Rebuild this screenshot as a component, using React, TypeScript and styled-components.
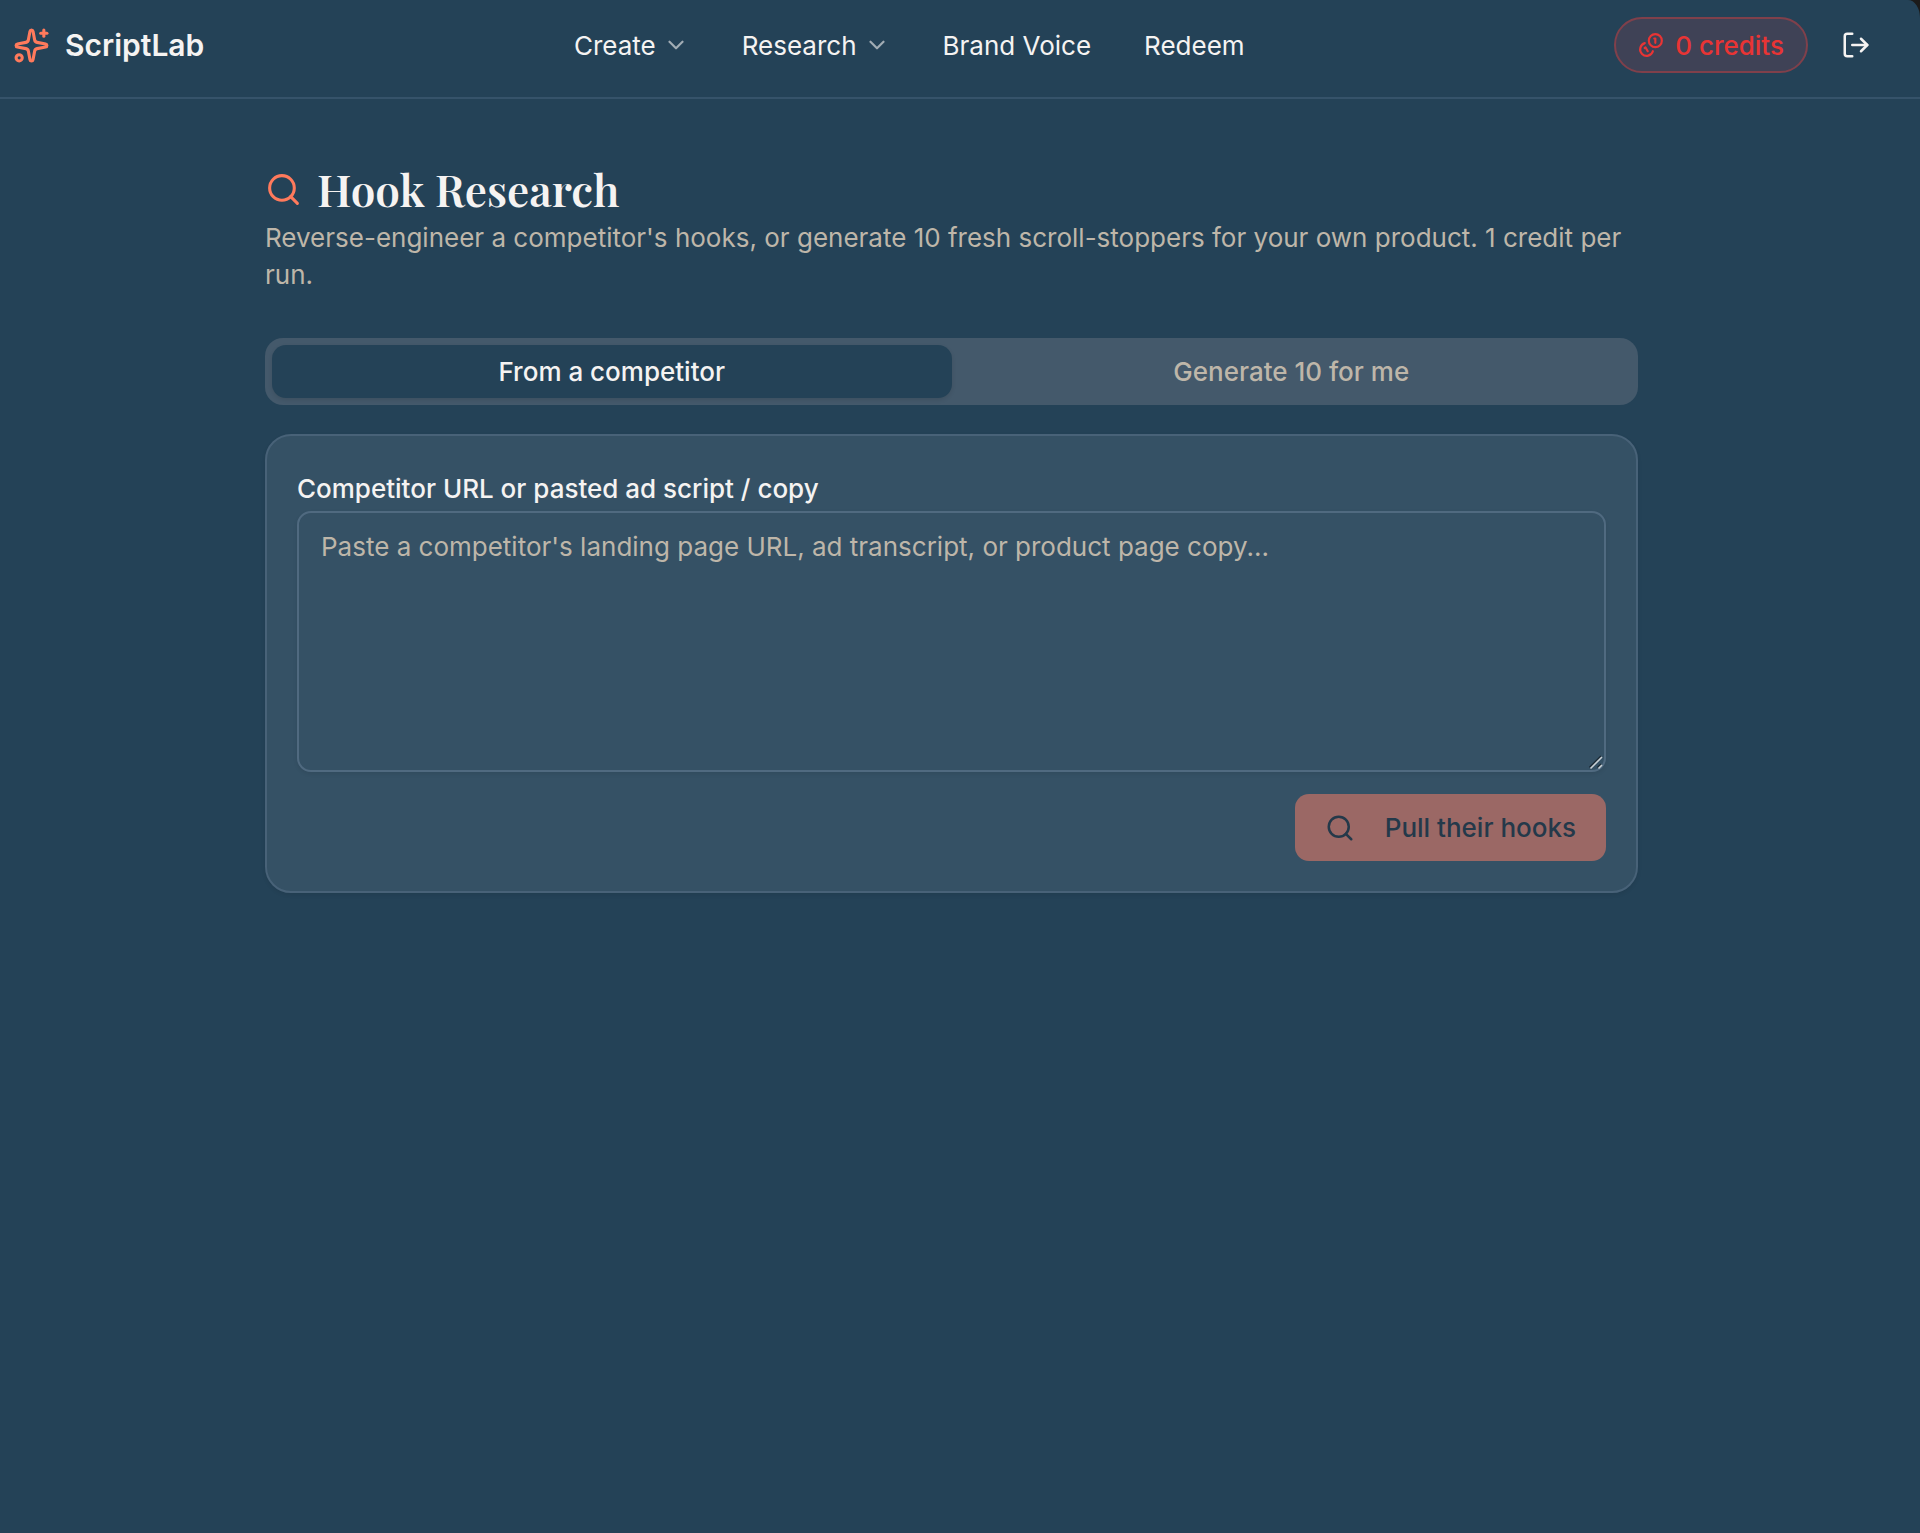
import React, { useState } from "react";
import styled, { createGlobalStyle } from "styled-components";
import { ChevronDown, LogOut, Search, Sparkles } from "lucide-react";

const color = {
  page: "#244257",
  line: "#36536a",
  card: "#355165",
  cardLine: "#486278",
  fieldLine: "#506a80",
  track: "#44596b",
  text: "#f5f3f2",
  muted: "#beb6a9",
  accent: "#ff7a5c",
  danger: "#e93434",
};

const GlobalStyle = createGlobalStyle`
  *, *::before, *::after { box-sizing: border-box; }
  html { background: #1c1b1a; }
  body {
    margin: 0;
    color: ${color.text};
    font-family: Inter, "Noto Sans", sans-serif;
    font-size: 26px;
    line-height: 37px;
  }
  button, textarea { font: inherit; color: inherit; }
`;

const Page = styled.div`
  min-height: 100vh;
  background: ${color.page};
  border-radius: 0 12px 0 0 / 0 18px 0 0;
`;

const Header = styled.header`
  display: flex;
  align-items: center;
  justify-content: space-between;
  padding: 17px 23px 24px 13px;
  border-bottom: 2px solid ${color.line};
`;

const Brand = styled.a`
  display: flex;
  align-items: center;
  gap: 15px;
  color: inherit;
  font-size: 30px;
  font-weight: 600;
  text-decoration: none;

  svg { color: ${color.accent}; }
`;

const Nav = styled.nav`
  display: flex;
  align-items: center;
  gap: 9px;
`;

const NavButton = styled.button`
  display: flex;
  align-items: center;
  gap: 7px;
  padding: 0 22px;
  border: 0;
  background: none;
  cursor: pointer;

  svg { opacity: 0.6; }
`;

const NavLink = styled.a`
  padding: 0 22px;
  color: inherit;
  text-decoration: none;
`;

const Account = styled.div`
  display: flex;
  align-items: center;
  gap: 7px;
`;

const Credits = styled.a`
  display: flex;
  align-items: center;
  gap: 11px;
  height: 56px;
  padding: 0 22px;
  border: 2px solid #80404b;
  border-radius: 28px;
  background: #3f4256;
  color: ${color.danger};
  font-weight: 500;
  text-decoration: none;
`;

const IconButton = styled.button`
  display: flex;
  padding: 13px 26px;
  border: 0;
  background: none;
  cursor: pointer;
`;

const Main = styled.main`
  padding: 60px 17px 60px 0;
`;

const Content = styled.div`
  max-width: 1373px;
  margin: 0 auto;
`;

const Title = styled.h1`
  display: flex;
  align-items: center;
  gap: 15px;
  margin: 0;
  font-family: "Playfair Display", "Liberation Serif", serif;
  font-size: 44px;
  font-weight: 600;
  line-height: 60px;

  svg { color: ${color.accent}; }
`;

const Lead = styled.p`
  margin: 0 0 45px;
  color: ${color.muted};
`;

const Tabs = styled.div`
  display: grid;
  grid-template-columns: 1fr 1fr;
  margin-bottom: 29px;
  padding: 7px;
  border-radius: 18px;
  background: ${color.track};
`;

const Tab = styled.button<{ $active: boolean }>`
  height: 53px;
  padding: 0 22px;
  border: 0;
  border-radius: 14px;
  background: ${(p) => (p.$active ? color.page : "transparent")};
  box-shadow: ${(p) => (p.$active ? "0 2px 4px rgba(0, 0, 0, 0.1)" : "none")};
  color: ${(p) => (p.$active ? color.text : color.muted)};
  font-weight: 500;
  cursor: pointer;
`;

const Card = styled.form`
  display: flex;
  flex-direction: column;
  padding: 30px;
  border: 2px solid ${color.cardLine};
  border-radius: 26px;
  background: ${color.card};
  box-shadow: 0 2px 4px rgba(0, 0, 0, 0.08);
`;

const Label = styled.label`
  font-weight: 500;
  line-height: 45px;
`;

const Field = styled.div`
  position: relative;
  display: flex;
  margin-bottom: 22px;
`;

const TextArea = styled.textarea`
  width: 100%;
  height: 261px;
  margin: 0;
  padding: 15px 22px;
  border: 2px solid ${color.fieldLine};
  border-radius: 14px;
  outline: none;
  background: transparent;
  box-shadow: 0 2px 4px rgba(0, 0, 0, 0.08);
  resize: vertical;

  &::placeholder { color: ${color.muted}; opacity: 1; }
  &::-webkit-resizer { display: none; }
`;

const Grip = styled.svg`
  position: absolute;
  right: 2px;
  bottom: 2px;
  pointer-events: none;
`;

const Submit = styled.button`
  display: flex;
  align-items: center;
  align-self: flex-end;
  gap: 30px;
  height: 67px;
  padding: 0 30px;
  border: 0;
  border-radius: 14px;
  background: #9b6865;
  color: #24394a;
  font-weight: 500;
`;

function CoinsIcon() {
  return (
    <svg width="26" height="26" viewBox="0 0 24 24" fill="none" stroke="currentColor" strokeWidth="2" strokeLinecap="round" strokeLinejoin="round" aria-hidden="true">
      <path d="M13.744 17.736a6 6 0 1 1-7.48-7.48" />
      <path d="M15 6h1v4" />
      <path d="m6.134 14.768.866-.5 2 3.464" />
      <circle cx="16" cy="8" r="6" />
    </svg>
  );
}

function ResizeGrip() {
  return (
    <Grip width="15" height="15" viewBox="0 0 15 15" fill="none" strokeWidth="1.6" aria-hidden="true">
      <path d="M0.5 12.5 12 1M8.5 12.5 12 9" stroke="#1d2b36" />
      <path d="M1.5 13.5 13 2M9.5 13.5 13 10" stroke="#c9d0d5" />
    </Grip>
  );
}

const tabs = ["From a competitor", "Generate 10 for me"];

export default function App() {
  const [active, setActive] = useState(0);
  const [source, setSource] = useState("");

  return (
    <>
      <GlobalStyle />
      <Page>
        <Header>
          <Brand href="#">
            <Sparkles size={37} />
            ScriptLab
          </Brand>
          <Nav>
            <NavButton type="button">
              Create
              <ChevronDown size={26} />
            </NavButton>
            <NavButton type="button">
              Research
              <ChevronDown size={26} />
            </NavButton>
            <NavLink href="#">Brand Voice</NavLink>
            <NavLink href="#">Redeem</NavLink>
          </Nav>
          <Account>
            <Credits href="#">
              <CoinsIcon />
              0 credits
            </Credits>
            <IconButton type="button" aria-label="Log out">
              <LogOut size={30} />
            </IconButton>
          </Account>
        </Header>
        <Main>
          <Content>
            <Title>
              <Search size={37} />
              Hook Research
            </Title>
            <Lead>
              Reverse-engineer a competitor's hooks, or generate 10 fresh scroll-stoppers for your own product. 1 credit
              per run.
            </Lead>
            <Tabs role="tablist">
              {tabs.map((name, i) => (
                <Tab key={name} type="button" role="tab" aria-selected={i === active} $active={i === active} onClick={() => setActive(i)}>
                  {name}
                </Tab>
              ))}
            </Tabs>
            <Card onSubmit={(e) => e.preventDefault()}>
              <Label htmlFor="source">Competitor URL or pasted ad script / copy</Label>
              <Field>
                <TextArea
                  id="source"
                  value={source}
                  onChange={(e) => setSource(e.target.value)}
                  placeholder="Paste a competitor's landing page URL, ad transcript, or product page copy..."
                />
                <ResizeGrip />
              </Field>
              <Submit type="submit" disabled={!source.trim()}>
                <Search size={30} />
                Pull their hooks
              </Submit>
            </Card>
          </Content>
        </Main>
      </Page>
    </>
  );
}
